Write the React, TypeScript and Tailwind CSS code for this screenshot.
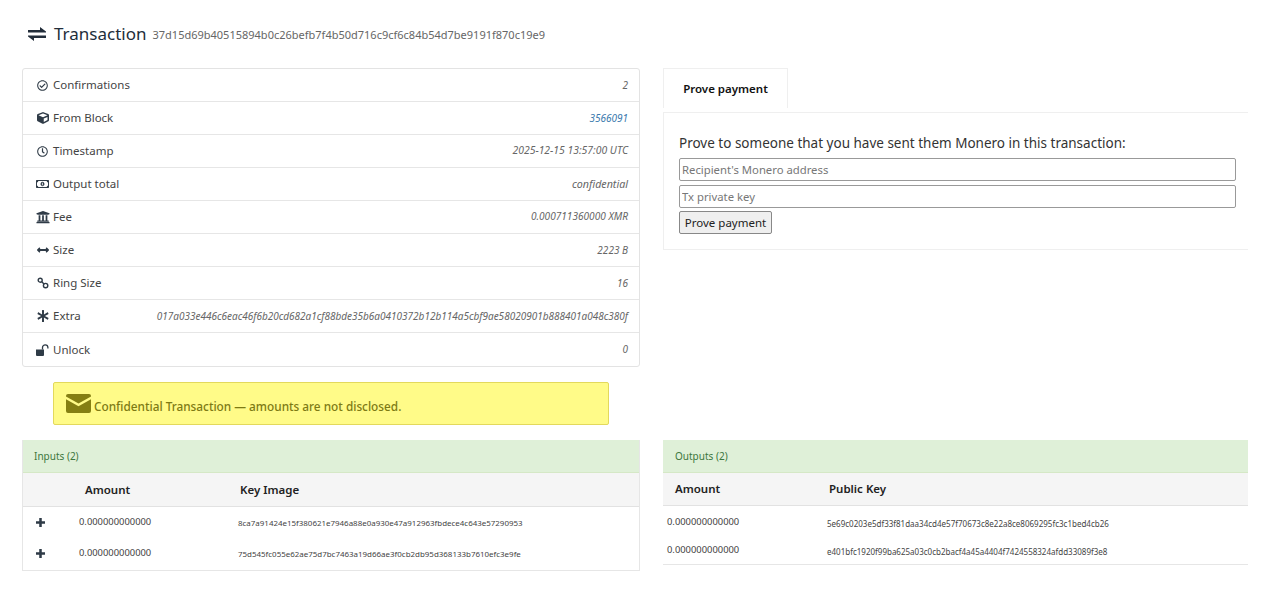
import type { ReactNode } from 'react'
import {
  FaArrowsAltH,
  FaAsterisk,
  FaCube,
  FaRegCheckCircle,
  FaRegClock,
  FaRegMoneyBillAlt,
  FaUniversity,
} from 'react-icons/fa'

// two chained rings, glyphicon style
function RingIcon() {
  return (
    <svg viewBox="0 0 12 12" className="h-3 w-3" fill="none" stroke="currentColor" strokeWidth="1.4">
      <circle cx="3.2" cy="3.2" r="2" />
      <circle cx="8.6" cy="8.6" r="2.2" />
      <path d="M4.8 4.800l2.200 2.200" />
    </svg>
  )
}

function TransferIcon() {
  return (
    <svg viewBox="0 0 18 14" className="h-[14px] w-[18px]" fill="currentColor">
      <path d="M0 3h12V0l6 4.500v1H0zM18 8.500V11H6v3L0 9.500v-1z" />
    </svg>
  )
}

function OpenLockIcon() {
  return (
    <svg viewBox="0 0 13 12" className="h-3 w-[13px]" fill="currentColor">
      <path d="M0 5.500h8V11a1 1 0 0 1-1 1H1a1 1 0 0 1-1-1z" />
      <path d="M6.500 5.500V3.500a2.700 2.700 0 0 1 5.400 0v1" fill="none" stroke="currentColor" strokeWidth="1.300" />
    </svg>
  )
}

function PlusIcon() {
  return (
    <svg viewBox="0 0 10 10" className="ml-[13px] h-[9px] w-[9px] text-[#2f3b47]" fill="currentColor">
      <path d="M3.600 0h2.800v3.600H10v2.800H6.400V10H3.600V6.400H0V3.600h3.600z" />
    </svg>
  )
}

function MailIcon() {
  return (
    <svg viewBox="0 0 25 19" className="h-[19px] w-[25px] shrink-0" fill="#857f13">
      <path d="M2 0h21a2 2 0 0 1 2 2v.6L12.500 9.400 0 2.600V2a2 2 0 0 1 2-2z" />
      <path d="M0 5.300l12.500 7L25 5.300V17a2 2 0 0 1-2 2H2a2 2 0 0 1-2-2z" />
    </svg>
  )
}

const rows: { icon: ReactNode; label: string; value: string; size: string; link?: boolean }[] = [
  { icon: <FaRegCheckCircle className="h-[11px] w-[11px]" />, label: 'Confirmations', value: '2', size: 'text-[10px]' },
  { icon: <FaCube className="h-3 w-3" />, label: 'From Block', value: '3566091', size: 'text-[10px]', link: true },
  {
    icon: <FaRegClock className="h-[11px] w-[11px]" />,
    label: 'Timestamp',
    value: '2025-12-15 13:57:00 UTC',
    size: 'text-[10.4px]',
  },
  {
    icon: <FaRegMoneyBillAlt className="h-3 w-[13px]" />,
    label: 'Output total',
    value: 'confidential',
    size: 'text-[10.7px]',
  },
  {
    icon: <FaUniversity className="h-[14px] w-[14px]" />,
    label: 'Fee',
    value: '0.000711360000 XMR',
    size: 'text-[10.1px]',
  },
  { icon: <FaArrowsAltH className="h-3 w-3" />, label: 'Size', value: '2223 B', size: 'text-[10px]' },
  { icon: <RingIcon />, label: 'Ring Size', value: '16', size: 'text-[10px]' },
  {
    icon: <FaAsterisk className="h-3 w-3" />,
    label: 'Extra',
    value: '017a033e446c6eac46f6b20cd682a1cf88bde35b6a0410372b12b114a5cbf9ae58020901b888401a048c380f',
    size: 'text-[10px]',
  },
  { icon: <OpenLockIcon />, label: 'Unlock', value: '0', size: 'text-[10px]' },
]

const inputs = [
  '8ca7a91424e15f380621e7946a88e0a930e47a912963fbdece4c643e57290953',
  '75d545fc055e62ae75d7bc7463a19d66ae3f0cb2db95d368133b7610efc3e9fe',
]

const outputs = [
  '5e69c0203e5df33f81daa34cd4e57f70673c8e22a8ce8069295fc3c1bed4cb26',
  'e401bfc1920f99ba625a03c0cb2bacf4a45a4404f7424558324afdd33089f3e8',
]

export default function App() {
  return (
    <div className="h-[606px] w-[1280px] overflow-hidden bg-white font-['Noto_Sans',sans-serif] text-[#333]">
      <h1 className="flex h-[68px] items-center pb-[1px] pl-7 text-[#222d3a]">
        <TransferIcon />
        <span className="ml-[8px] text-[17px] leading-none">Transaction</span>
        <span className="ml-[6px] mt-[3px] text-[11px] text-[#666]">
          37d15d69b40515894b0c26befb7f4b50d716c9cf6c84b54d7be9191f870c19e9
        </span>
      </h1>

      <div className="grid grid-cols-[618px_585px] gap-x-[23px] pl-[22px]">
        <div>
          <div className="rounded-[3px] border border-[#e3e3e3]">
            {rows.map((row) => (
              <div
                key={row.label}
                className="flex h-[33px] items-center border-b border-[#e6e6e6] pl-[12px] pr-[11px] last:border-b-0"
              >
                <span className="flex w-[18px] justify-center pr-[3px] text-[#2f3b47]">{row.icon}</span>
                <span className="text-[11.5px] text-[#444]">{row.label}</span>
                <span className={`ml-auto italic ${row.size} ${row.link ? 'text-[#3a79ad]' : 'text-[#666]'}`}>
                  {row.value}
                </span>
              </div>
            ))}
          </div>

          <div className="ml-[31px] mt-[15px] flex h-[43px] w-[556px] items-center gap-[3px] rounded-[2px] border border-[#e3d95c] bg-[#fffb88] pl-[12px] text-[11.8px] font-medium text-[#7d7a14]">
            <MailIcon />
            <span className="mt-[7px]">Confidential Transaction — amounts are not disclosed.</span>
          </div>
        </div>

        <div>
          <div className="h-[40px] w-[125px] border-x border-t border-[#efefef] pt-[11px] text-center text-[11.5px] font-semibold text-[#111]">
            Prove payment
          </div>
          <div className="mt-1 h-[138px] border-y border-l border-[#efefef] px-[15px] pt-[21px]">
            <p className="text-[13.5px] leading-[18px] text-[#333]">
              Prove to someone that you have sent them Monero in this transaction:
            </p>
            <input
              placeholder="Recipient's Monero address"
              className="mt-[6px] block h-[23px] w-[557px] rounded-[2px] border border-[#999] px-[2px] text-[11.3px] placeholder:text-[#777]"
            />
            <input
              placeholder="Tx private key"
              className="mt-[4px] block h-[23px] w-[557px] rounded-[2px] border border-[#999] px-[2px] text-[11.3px] placeholder:text-[#777]"
            />
            <button className="mt-[3px] block h-[23px] w-[93px] rounded-[2px] border border-[#888] bg-[#efefef] text-[11.5px] text-[#222]">
              Prove payment
            </button>
          </div>
        </div>

        <div className="mt-[15px] border border-t-0 border-[#e6e6e6] pb-[1px]">
          <div className="flex h-[33px] items-center border-b border-[#d5e8c6] bg-[#dff0d8] pl-[11px] text-[10px] text-[#3c763d]">
            Inputs (2)
          </div>
          <div className="grid h-[34px] grid-cols-[62px_155px_1fr] items-center border-b border-[#e2e2e2] bg-[#f5f5f5] text-[11.5px] font-semibold text-[#222]">
            <span />
            <span>Amount</span>
            <span>Key Image</span>
          </div>
          {inputs.map((hash) => (
            <div key={hash} className="grid h-[31px] grid-cols-[56px_159px_1fr] items-center">
              <PlusIcon />
              <span className="text-[9.4px] text-[#444]">0.000000000000</span>
              <span className="mt-[3px] text-[7.95px] text-[#444]">{hash}</span>
            </div>
          ))}
        </div>

        <div className="mt-[15px] h-[125px] border-b border-[#e6e6e6]">
          <div className="flex h-[33px] items-center border-b border-[#d5e8c6] bg-[#dff0d8] pl-[12px] text-[10px] text-[#3c763d]">
            Outputs (2)
          </div>
          <div className="mb-[2px] grid h-[33px] grid-cols-[154px_1fr] items-center border-b border-[#e2e2e2] bg-[#f5f5f5] pl-[12px] text-[11.5px] font-semibold text-[#222]">
            <span>Amount</span>
            <span>Public Key</span>
          </div>
          {outputs.map((hash) => (
            <div key={hash} className="grid h-[28px] grid-cols-[160px_1fr] items-center pl-[4px]">
              <span className="text-[9.4px] text-[#444]">0.000000000000</span>
              <span className="mt-[3px] text-[8px] text-[#444]">{hash}</span>
            </div>
          ))}
        </div>
      </div>
    </div>
  )
}
